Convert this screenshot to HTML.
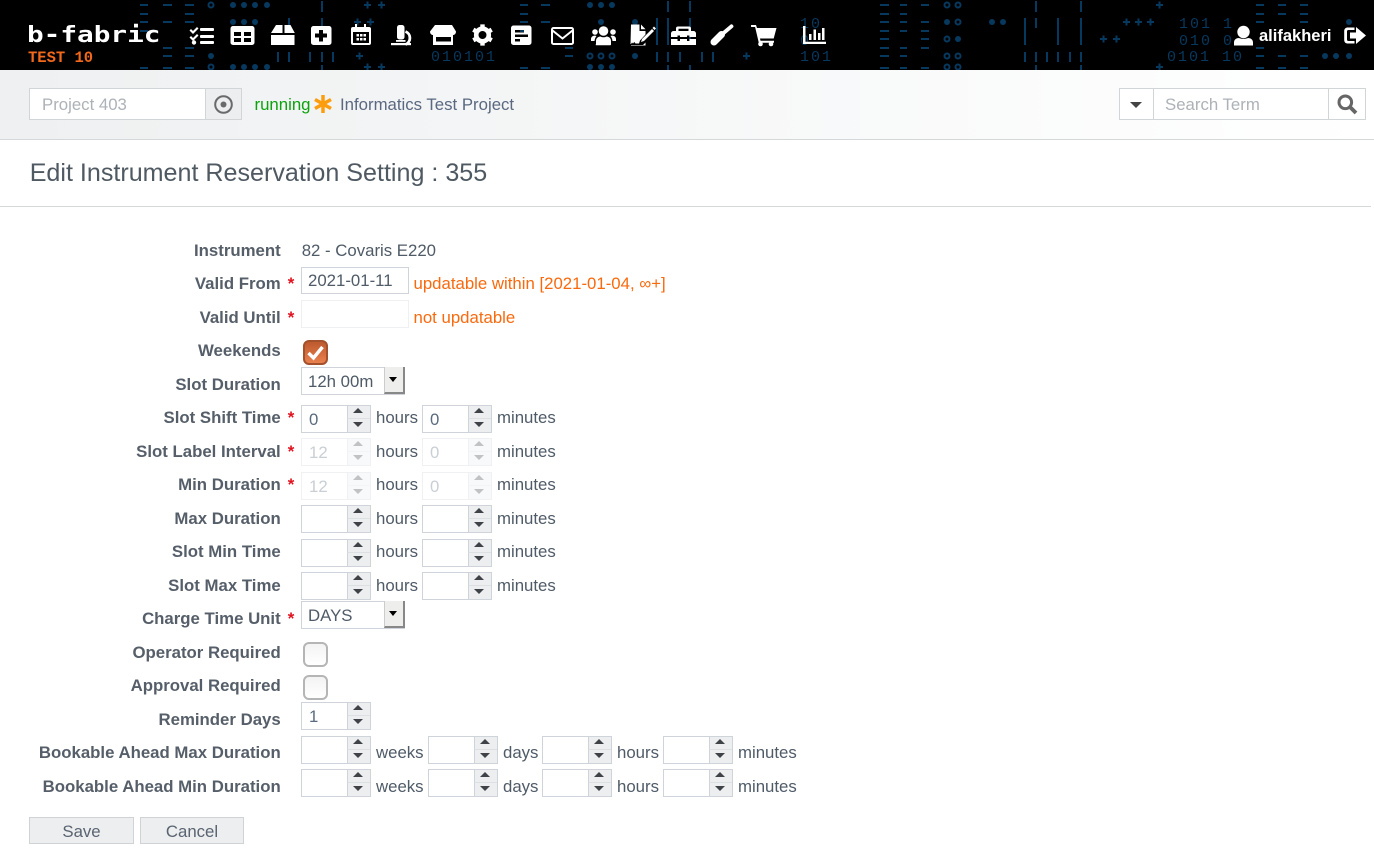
<!DOCTYPE html>
<html><head><meta charset="utf-8"><title>Edit Instrument Reservation Setting</title>
<style>
html,body{margin:0;padding:0;background:#fff;width:1374px;height:854px;overflow:hidden;font-family:"Liberation Sans",sans-serif;font-size:16.8px;color:#4f5b67}
.a,.l,.t,.r,.o,.i,.sp,.sel,.cb,.btn{position:absolute;box-sizing:border-box;white-space:nowrap}
.l,.t,.r,.o{margin-top:1px}
.l{right:1093.3px;font-weight:bold;line-height:20px;color:#565f69}
.t{line-height:20px}
.r{left:287.700px;color:#e0101c;font-weight:bold;line-height:20px}
.o{left:413.500px;color:#f96a0e;line-height:20px}
.i{left:301px;width:108px;height:27px;border:1px solid #ced4da;background:#fff;padding:0 6px;line-height:26px}
.sp{height:28px;border:1px solid #ced4da;background:#fff;padding-left:7px;line-height:27px;color:#5a6b7d}
.sp i{position:absolute;right:0;top:0;width:23px;height:12px;background:#eceef0;border-left:1px solid #ced4da;box-sizing:border-box}
.sp b{position:absolute;right:0;bottom:0;width:23px;height:14px;background:#eceef0;border-left:1px solid #ced4da;border-top:1px solid #dde0e3;box-sizing:border-box}
.sp i:after{content:"";position:absolute;left:5px;top:2px;border:5.500px solid transparent;border-top:0;border-bottom:5px solid #3f4347}
.sp b:after{content:"";position:absolute;left:5px;top:3px;border:5.500px solid transparent;border-bottom:0;border-top:5px solid #3f4347}
.dis{opacity:.32}
.sel{left:301px;width:104px;height:28px;border:1px solid #ced4da;padding-left:6px;line-height:27px;background:#fff}
.sel u{position:absolute;right:-1px;top:-1px;width:21px;height:27px;background:#eeeeec;border-left:1px solid #ccc;border-right:2px solid #888;border-bottom:2px solid #888;box-sizing:border-box}
.sel u:after{content:"";position:absolute;left:4px;top:10px;border:4.500px solid transparent;border-bottom:0;border-top:5px solid #000}
.cb{left:303px;width:25px;height:25px;border:2px solid #b5b5b5;border-radius:6px;background:linear-gradient(#f3f3f3,#fff)}
.btn{top:817px;height:27px;background:#eceef0;border:1px solid #cfd3d6;text-align:center;line-height:27px;color:#5a6470}
</style></head><body>

<svg class="a" style="left:0;top:0;position:absolute" width="1374" height="70" viewBox="0 0 1374 70">
<rect width="1374" height="70" fill="#000"/>
<g stroke="#07385e" stroke-width="2" fill="none">
<path d="M140 5h8M163 5h9M185 5h9M140 14h8M185 14h9M140 22h8M163 22h9M185 22h9M140 31h8M163 48h9M185 48h9M163 56h9M185 56h9M140 68h8M163 68h9M185 68h9"/>
<path d="M520 5h8M541 5h9M520 14h8M520 22h8M541 22h9M520 31h8M520 39h8M565 48h8M565 56h8M520 68h8M541 68h9"/>
<path d="M880 5h9M880 14h9M880 22h9M880 31h9M880 39h9M880 48h9M880 56h9M880 68h9"/>
<path d="M900 5h7M921 5h8M900 14h7M900 22h7M921 22h8M900 31h7M921 31h8M921 39h8M900 48h7M921 48h8M900 56h7M900 68h7M921 68h8"/>
<path d="M1256 5h8M1278 5h8M1300 5h8M1256 14h8M1278 14h8M1300 14h8M1256 22h8M1300 22h8M1256 48h8M1256 56h8M1278 56h8M1300 56h8M1256 68h8M1278 68h8M1300 68h8"/>
<path d="M322 1v11M289 18v11M322 18v11M278 52v10M289 52v10M310 52v10M322 52v10M333 52v10M322 65v5"/>
<path d="M668 1v11M690 1v11M657 18v27M668 18v27M690 18v27M657 52v10M668 52v10M680 52v10M702 52v10M713 52v10M668 65v5M690 65v5"/>
<path d="M1036 1v11M1081 1v11M1025 18v27M1036 18v10M1058 18v27M1081 18v27M1025 52v10M1036 52v10M1047 52v10M1058 52v10M1070 52v10M1081 52v10M1036 65v5M1081 65v5"/>
<path d="M364 5h7M367.500 1.500v7M378 5h7M381.500 1.500v7M354 22h7M357.500 18.500v7M367 22h7M370.500 18.500v7M356 56h7M359.500 52.500v7M364 67h7M367.500 63.500v7M378 67h7M381.500 63.500v7M743 56h7M746.500 52.500v7M1156 5h7M1159.500 1.500v7M1123 22h7M1126.500 18.500v7M1135 22h7M1138.500 18.500v7M1147 22h7M1150.500 18.500v7M1100 39h7M1103.500 35.500v7M1113 39h7M1116.500 35.500v7M1156 67h7M1159.500 63.500v7"/>
<circle cx="211" cy="5" r="2.500"/><circle cx="211" cy="67" r="2.500"/>
<circle cx="590" cy="56" r="2.500"/><circle cx="601" cy="56" r="2.500"/><circle cx="612" cy="56" r="2.500"/>
<circle cx="947" cy="5" r="2.500"/><circle cx="958" cy="5" r="2.500"/><circle cx="958" cy="22" r="2.500"/><circle cx="947" cy="39" r="2.500"/><circle cx="947" cy="56" r="2.500"/><circle cx="958" cy="56" r="2.500"/><circle cx="947" cy="67" r="2.500"/><circle cx="958" cy="67" r="2.500"/>
</g>
<g fill="#07385e">
<circle cx="233" cy="5" r="3"/><circle cx="244" cy="5" r="3"/><circle cx="255" cy="5" r="3"/><circle cx="267" cy="5" r="3"/><circle cx="233" cy="22" r="3"/><circle cx="244" cy="22" r="3"/><circle cx="255" cy="22" r="3"/><circle cx="211" cy="56" r="3"/><circle cx="233" cy="67" r="3"/><circle cx="244" cy="67" r="3"/><circle cx="255" cy="67" r="3"/><circle cx="267" cy="67" r="3"/>
<circle cx="590" cy="5" r="3"/><circle cx="601" cy="5" r="3"/><circle cx="612" cy="5" r="3"/><circle cx="601" cy="22" r="3"/><circle cx="635" cy="22" r="3"/><circle cx="635" cy="56" r="3"/><circle cx="590" cy="67" r="3"/><circle cx="601" cy="67" r="3"/><circle cx="612" cy="67" r="3"/>
<circle cx="947" cy="22" r="3"/><circle cx="958" cy="39" r="3"/><circle cx="992" cy="22" r="3"/><circle cx="1003" cy="22" r="3"/>
<circle cx="1325" cy="56" r="3"/><circle cx="1336" cy="56" r="3"/><circle cx="1349" cy="56" r="3"/><circle cx="1349" cy="22" r="3"/>
<g font-family="Liberation Mono, monospace" font-size="15" letter-spacing="2">
<text x="431" y="61">010101</text><text x="800" y="28">10</text><text x="800" y="45">0</text><text x="800" y="61">101</text>
<text x="1179" y="28">101 1</text><text x="1179" y="45">010 0</text><text x="1167" y="61">0101 10</text>
</g></g>
<g fill="#fff">
<!-- list -->
<path d="M191 29l2 2 4-4 1.500 1.500-5.500 5.500-3.500-3.500zM191 36l2 2 4-4 1.500 1.500-5.500 5.500-3.500-3.500z"/><circle cx="194" cy="42.500" r="2.200"/>
<rect x="200" y="28" width="14" height="3" rx="1"/><rect x="200" y="35" width="14" height="3" rx="1"/><rect x="200" y="41" width="14" height="3" rx="1"/>
<!-- table -->
<path fill-rule="evenodd" d="M233 26h19a2.500 2.500 0 0 1 2.500 2.500v14a2.500 2.500 0 0 1-2.500 2.500h-19a2.500 2.500 0 0 1-2.500-2.500v-14a2.500 2.500 0 0 1 2.500-2.500zM234 32v4h7v-4zM244 32v4h7v-4zM234 38v4h7v-4zM244 38v4h7v-4z"/>
<!-- box -->
<path d="M276 25h6.500v8h-11.500zM284.500 25h6l4.300 8h-10.300zM271 35h23.500v10h-23.500z"/>
<!-- plus -->
<path fill-rule="evenodd" d="M313.500 26h15.500a2.500 2.500 0 0 1 2.500 2.500v14a2.500 2.500 0 0 1-2.500 2.500h-15.500a2.500 2.500 0 0 1-2.500-2.500v-14a2.500 2.500 0 0 1 2.500-2.500zM319 30v3.500h-4v4h4v4h4v-4h4v-4h-4v-3.500z"/>
<!-- calendar -->
<path fill-rule="evenodd" d="M355 24h2v3h7v-3h2v3h3a2 2 0 0 1 2 2v14a2 2 0 0 1-2 2h-16a2 2 0 0 1-2-2v-14a2 2 0 0 1 2-2h2zM353 32v11h16v-11zM356.500 34h2.500v2.500h-2.500zM360 34h2.500v2.500h-2.500zM363.500 34h2.500v2.500h-2.500zM356.500 38h2.500v2.500h-2.500zM360 38h2.500v2.500h-2.500zM363.500 38h2.500v2.500h-2.500z"/>
<!-- microscope -->
<rect x="397" y="25" width="7.500" height="14.500" rx="2.500"/><rect x="396" y="40" width="9.500" height="1.800"/><rect x="391" y="43" width="20" height="2.200"/>
<path d="M405.500 31.500a7 7 0 0 1 0 13" fill="none" stroke="#fff" stroke-width="2.800"/>
<!-- store -->
<path fill-rule="evenodd" d="M435 25h17l4 6.500c0 2.300-1.500 3.500-3 3.500v10h-20v-10c-1.500 0-3-1.200-3-3.500zM436 37v4.500h15v-4.500z"/>
<!-- gear -->
<circle cx="482.500" cy="35" r="6.300" fill="none" stroke="#fff" stroke-width="4.600"/>
<path d="M482.500 24.400v21.200M473.300 29.700l18.400 10.600M491.700 29.700l-18.400 10.600" stroke="#fff" stroke-width="4.400" stroke-dasharray="4 13.200 4"/>
<!-- doc -->
<path fill-rule="evenodd" d="M513.500 25.500h15.500a2.500 2.500 0 0 1 2.500 2.500v14.500a2.500 2.500 0 0 1-2.500 2.500h-15.500a2.500 2.500 0 0 1-2.500-2.500v-14.500a2.500 2.500 0 0 1 2.500-2.500zM515 30v2.500h9v-2.500zM515 34.500v2.500h13v-2.500zM515 39v2.500h5v-2.500z"/>
<!-- envelope -->
<rect x="552" y="28" width="21" height="16" rx="1.500" fill="none" stroke="#fff" stroke-width="2"/><path d="M552.500 30.500l10 8 10-8" fill="none" stroke="#fff" stroke-width="2"/>
<!-- users -->
<circle cx="603.500" cy="31" r="4.800"/><circle cx="595" cy="32" r="2.800"/><circle cx="613" cy="32" r="2.800"/>
<path d="M596 44.500v-3.500c0-3.500 3-4.500 4.500-4.500 1.800 1 4.200 1 6 0 1.500 0 4.500 1 4.500 4.500v3.500q0 .8-1 .8h-13.500q-1 0-1-.8zM591 41h3.500c.2-2 .8-3.500 2-5-2.500-1-5.500.5-5.500 3zM616 41h-3.500c-.2-2-.8-3.500-2-5 2.500-1 5.500.5 5.500 3z"/>
<!-- file sign -->
<path d="M631 24.500h8.500v6.500h6v3.500l-5.500 6-1 3h-3.500l-1.200-1.500-1.300 1.500-1-1-1 1.500h-.5zM641 24.500l4.500 4.800h-4.500zM631 45.500h14.500v-3l-2.500 2.500h-12z"/><path d="M644 41l-3 1 1-3 10-10 2 2zM652.500 28l1.500-1.500 2 2-1.500 1.500z"/>
<!-- toolbox -->
<path fill-rule="evenodd" d="M678 26.500h11c1.300 0 2 .8 2 2v2.500h2.500a2.500 2.500 0 0 1 2.500 2.500v3.500h-6.500v-1.500h-2.500v1.500h-7v-1.500h-2.500v1.500h-6.500v-3.500a2.500 2.500 0 0 1 2.500-2.500h2.500v-2.500c0-1.200.7-2 2-2zM678.500 28.800v2.200h10v-2.200zM671 39h6.500v2h2.500v-2h7v2h2.500v-2h6.500v6h-25z"/>
<!-- screwdriver -->
<path d="M714 42l7.500-7.500" fill="none" stroke="#fff" stroke-width="7" stroke-linecap="round"/><path d="M723 33.500l8.500-7.200" fill="none" stroke="#fff" stroke-width="3.800" stroke-linecap="round"/>
<!-- cart -->
<path d="M751 25h5l1 3h19.500l-2.800 10.500h-13.700l.5 2.300h13.500v2h-15.200l-3.700-15.800h-4z"/>
<circle cx="760.500" cy="44" r="2.300"/><circle cx="771" cy="44" r="2.300"/>
<!-- chart -->
<path d="M803 26h2.500v15.700h20.500v2.300h-23zM809 34h2.500v6h-2.500zM813.500 29.500h2.500v10.500h-2.500zM818 33h2.500v7h-2.500zM822 28h2.500v12h-2.500z"/>
<!-- user -->
<circle cx="1243.500" cy="32" r="6.200"/><path d="M1234 45.500v-3c0-3 2.500-4.500 5-4.500 2.500 1.200 6.500 1.200 9 0 2.500 0 5 1.500 5 4.500v3z"/>
<!-- logout -->
<path fill-rule="evenodd" d="M1348 27.500h6.500v2.500h-6c-1 0-1.500.5-1.500 1.500v8c0 1 .5 1.500 1.500 1.500h6v2.500h-6.500c-2.500 0-3.800-1.300-3.800-3.800v-8.400c0-2.500 1.300-3.800 3.800-3.800zM1356 27l10 8.500-10 8.500v-5.500h-6v-6h6z"/>
</g>
<text transform="translate(27 42) scale(1.260 1)" font-family="DejaVu Sans Mono, monospace" font-size="22" font-weight="bold" fill="#fff">b-fabric</text>
<text x="28" y="62" font-family="Liberation Mono, monospace" font-size="15.500" font-weight="bold" fill="#f2691c">TEST 10</text>
<text x="1259" y="41" font-family="Liberation Sans, sans-serif" font-size="16.500" font-weight="bold" fill="#fff">alifakheri</text>
</svg>

<div class="a" style="left:0;top:70px;width:1374px;height:70px;background:linear-gradient(90deg,#eef0f1,#ffffff 100%);border-bottom:1px solid #d5d8db"></div>
<div class="a" style="left:29px;top:88px;width:177px;height:32px;background:#fff;border:1px solid #d2d5d8;padding-left:12px;line-height:32px;color:#adb2b7">Project 403</div>
<div class="a" style="left:205px;top:88px;width:37px;height:32px;background:#eceef0;border:1px solid #d2d5d8"></div>
<svg class="a" style="position:absolute;left:214px;top:95px" width="20" height="20"><circle cx="9.500" cy="9.500" r="8.300" fill="none" stroke="#6a6a6a" stroke-width="2"/><circle cx="9.500" cy="9.500" r="3" fill="#6a6a6a"/></svg>
<div class="t" style="position:absolute;left:254.500px;top:94px;color:#0ca40c">running</div>
<svg class="a" style="position:absolute;left:314px;top:95px" width="18" height="18"><path d="M9 0v18M1 4.500l16 9M17 4.500l-16 9" stroke="#fb9d0c" stroke-width="3.500"/></svg>
<div class="t" style="position:absolute;left:340px;top:94px;color:#5a6880">Informatics Test Project</div>
<div class="a" style="left:1119px;top:88px;width:247px;height:32px;background:#fff;border:1px solid #d2d5d8"></div>
<div class="a" style="left:1153px;top:88px;width:176px;height:32px;border-left:1px solid #d2d5d8;border-right:1px solid #d2d5d8;padding-left:11px;line-height:33px;color:#adb2b7">Search Term</div>
<div class="a" style="left:1130px;top:102px;border:5px solid transparent;border-bottom:0;border-top:6px solid #444;border-left-width:6px;border-right-width:6px"></div>
<svg class="a" style="position:absolute;left:1337px;top:94px" width="21" height="21"><circle cx="8.300" cy="8.300" r="6.300" fill="none" stroke="#666" stroke-width="3"/><path d="M13 13l6 6" stroke="#666" stroke-width="3.800"/></svg>

<div class="a" style="left:29.700px;top:158px;font-size:25.100px;line-height:30px;color:#4f5962">Edit Instrument Reservation Setting : 355</div>
<div class="a" style="left:0;top:206px;width:1371px;height:1px;background:#d5d8db"></div>

<div class="l" style="top:240px">Instrument</div><div class="t" style="position:absolute;left:301.700px;top:240px">82 - Covaris E220</div>
<div class="l" style="top:273px">Valid From</div><div class="r" style="top:273px">*</div>
<div class="i" style="top:267px">2021-01-11</div><div class="o" style="top:273px">updatable within [2021-01-04, ∞+]</div>
<div class="l" style="top:307px">Valid Until</div><div class="r" style="top:307px">*</div>
<div class="i" style="top:300px;height:28px;border-color:#eef0f2"></div><div class="o" style="top:307px">not updatable</div>
<div class="l" style="top:340px">Weekends</div>
<div class="cb" style="top:340px;border-color:#a3502c;background:linear-gradient(#bd5a2e,#e9804e)"><svg width="21" height="21" style="display:block"><path d="M3.500 11l5 5 9-11" fill="none" stroke="#fff" stroke-width="3.400"/></svg></div>
<div class="l" style="top:374px">Slot Duration</div><div class="sel" style="top:367px">12h 00m<u></u></div>
<div class="l" style="top:407px">Slot Shift Time</div><div class="r" style="top:407px">*</div>
<div class="sp" style="left:301px;top:405px;width:70px">0<i></i><b></b></div><div class="t" style="position:absolute;left:376px;top:407px">hours</div><div class="sp" style="left:422px;top:405px;width:70px">0<i></i><b></b></div><div class="t" style="position:absolute;left:497px;top:407px">minutes</div>
<div class="l" style="top:441px">Slot Label Interval</div><div class="r" style="top:441px">*</div>
<div class="sp dis" style="left:301px;top:438px;width:70px">12<i></i><b></b></div><div class="t" style="position:absolute;left:376px;top:441px">hours</div><div class="sp dis" style="left:422px;top:438px;width:70px">0<i></i><b></b></div><div class="t" style="position:absolute;left:497px;top:441px">minutes</div>
<div class="l" style="top:474px">Min Duration</div><div class="r" style="top:474px">*</div>
<div class="sp dis" style="left:301px;top:472px;width:70px">12<i></i><b></b></div><div class="t" style="position:absolute;left:376px;top:474px">hours</div><div class="sp dis" style="left:422px;top:472px;width:70px">0<i></i><b></b></div><div class="t" style="position:absolute;left:497px;top:474px">minutes</div>
<div class="l" style="top:508px">Max Duration</div>
<div class="sp" style="left:301px;top:505px;width:70px"><i></i><b></b></div><div class="t" style="position:absolute;left:376px;top:508px">hours</div><div class="sp" style="left:422px;top:505px;width:70px"><i></i><b></b></div><div class="t" style="position:absolute;left:497px;top:508px">minutes</div>
<div class="l" style="top:541px">Slot Min Time</div>
<div class="sp" style="left:301px;top:539px;width:70px"><i></i><b></b></div><div class="t" style="position:absolute;left:376px;top:541px">hours</div><div class="sp" style="left:422px;top:539px;width:70px"><i></i><b></b></div><div class="t" style="position:absolute;left:497px;top:541px">minutes</div>
<div class="l" style="top:575px">Slot Max Time</div>
<div class="sp" style="left:301px;top:572px;width:70px"><i></i><b></b></div><div class="t" style="position:absolute;left:376px;top:575px">hours</div><div class="sp" style="left:422px;top:572px;width:70px"><i></i><b></b></div><div class="t" style="position:absolute;left:497px;top:575px">minutes</div>
<div class="l" style="top:608px">Charge Time Unit</div><div class="r" style="top:608px">*</div><div class="sel" style="top:601px">DAYS<u></u></div>
<div class="l" style="top:642px">Operator Required</div><div class="cb" style="top:642px"></div>
<div class="l" style="top:675px">Approval Required</div><div class="cb" style="top:675px"></div>
<div class="l" style="top:709px">Reminder Days</div><div class="sp" style="left:301px;top:702px;width:70px">1<i></i><b></b></div>
<div class="l" style="top:742px">Bookable Ahead Max Duration</div>
<div class="sp" style="left:301px;top:736px;width:70px"><i></i><b></b></div><div class="t" style="position:absolute;left:376px;top:742px">weeks</div>
<div class="sp" style="left:428px;top:736px;width:70px"><i></i><b></b></div><div class="t" style="position:absolute;left:503px;top:742px">days</div>
<div class="sp" style="left:542px;top:736px;width:70px"><i></i><b></b></div><div class="t" style="position:absolute;left:617px;top:742px">hours</div>
<div class="sp" style="left:663px;top:736px;width:70px"><i></i><b></b></div><div class="t" style="position:absolute;left:738px;top:742px">minutes</div>
<div class="l" style="top:776px">Bookable Ahead Min Duration</div>
<div class="sp" style="left:301px;top:769px;width:70px"><i></i><b></b></div><div class="t" style="position:absolute;left:376px;top:776px">weeks</div>
<div class="sp" style="left:428px;top:769px;width:70px"><i></i><b></b></div><div class="t" style="position:absolute;left:503px;top:776px">days</div>
<div class="sp" style="left:542px;top:769px;width:70px"><i></i><b></b></div><div class="t" style="position:absolute;left:617px;top:776px">hours</div>
<div class="sp" style="left:663px;top:769px;width:70px"><i></i><b></b></div><div class="t" style="position:absolute;left:738px;top:776px">minutes</div>
<div class="btn" style="left:29px;width:105px">Save</div>
<div class="btn" style="left:140px;width:104px">Cancel</div>
</body></html>
